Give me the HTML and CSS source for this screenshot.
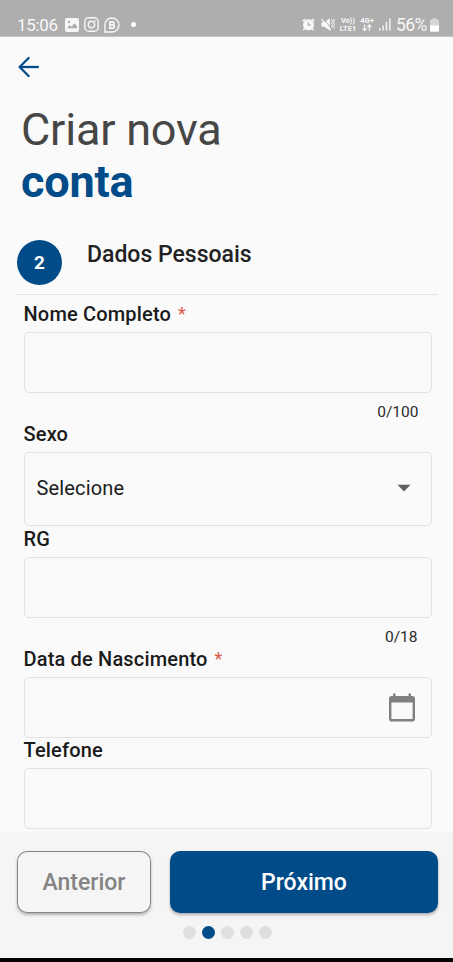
FILE: index.html
```html
<!DOCTYPE html>
<html lang="pt-BR">
<head>
<meta charset="utf-8">
<meta name="viewport" content="width=device-width">
<title>Criar nova conta</title>
<link rel="stylesheet" href="styles.css">
</head>
<body>
<div class="status">
  <span class="clock">15:06</span>
  <svg class="ic-photo" width="14" height="14" viewBox="0 0 14 14"><path fill="#f7f7f7" fill-rule="evenodd" d="M2 0h10a2 2 0 0 1 2 2v10a2 2 0 0 1-2 2H2a2 2 0 0 1-2-2V2a2 2 0 0 1 2-2zM1.800 10.200h10.400V8.500L9.300 5.300 6.600 8.700 4.700 7zM4 2.700a1.300 1.300 0 1 0 0 2.600 1.300 1.300 0 0 0 0-2.600z"/></svg>
  <svg class="ic-insta" width="15" height="15" viewBox="0 0 15 15" fill="none" stroke="#f7f7f7" stroke-width="1.400"><rect x=".8" y=".8" width="13.400" height="13.400" rx="3.800"/><circle cx="7.500" cy="7.500" r="3.200"/><circle cx="11.300" cy="3.700" r=".5" fill="#f7f7f7" stroke-width=".6"/></svg>
  <svg class="ic-chat" width="16" height="16" viewBox="0 0 16 16" fill="none" stroke="#f7f7f7" stroke-width="1.400"><path d="M.9 14.800V8A7 7 0 1 1 8 15H.9z"/><path stroke-width="1.600" d="M5.900 4.900h2.600a1.500 1.500 0 0 1 0 3H5.900zM5.900 7.900h2.900a1.600 1.600 0 0 1 0 3.200H5.900z"/></svg>
  <i class="notice"></i>
  <div class="system">
    <svg class="ic-alarm" width="13" height="13" viewBox="0 0 13 13"><circle cx="6.500" cy="6.800" r="5.500" fill="#fafafa"/><path d="M.7 3.200 3.200 1M12.300 3.200 9.800 1M2.600 10.800 1.300 12.300M10.400 10.800l1.300 1.500" stroke="#fafafa" stroke-width="1.600"/><path d="M6.300 3.800v3.300h2.600" fill="none" stroke="#aeaeae" stroke-width="1.100"/></svg>
    <svg class="ic-mute" width="14" height="13" viewBox="0 0 14 13"><path fill="#f8f8f8" d="M.5 4.300h3L8.800.3v12.200L3.500 8.700h-3z"/><path d="M2.200.500 10.500 10.500" stroke="#aeaeae" stroke-width="1"/><path d="M.6.800 9.800 12.300" stroke="#f8f8f8" stroke-width="1.200"/><path d="M10.500 1.200l1 1.800-1 1.800 1 1.800-1 1.800 1 1.800M12.500 1.200l1 1.800-1 1.800 1 1.800-1 1.800 1 1.800" fill="none" stroke="#f8f8f8" stroke-width="1"/></svg>
    <span class="net volte"><b>Vo))</b><b>LTE1</b></span>
    <span class="net data"><b>4G+</b><svg width="10" height="8" viewBox="0 0 10 8" fill="none" stroke="#f8f8f8" stroke-width="1.200"><path d="M2.600.5v6M.6 4.400l2 2.200 2-2.200M7.400 7V1M5.400 3.200l2-2.200 2 2.200"/></svg></span>
    <svg class="ic-signal" width="12" height="13" viewBox="0 0 12 13" fill="#f8f8f8"><path d="M0 10h1.400v2.600H0zM3.400 7.500h1.400v5.100H3.400zM6.800 4h1.400v8.600H6.800zM10.200.5h1.400v12.100h-1.400z"/></svg>
    <span class="percent">56%</span>
    <svg class="ic-battery" width="9" height="14" viewBox="0 0 9 14"><path fill="#d6d6d6" d="M2.500 1.500V.8q0-.6.600-.6h2.800q.6 0 .6.600v.7h.7Q9 1.500 9 3v5H0V3q0-1.500 1.800-1.500z"/><path fill="#fff" d="M0 7.600h9v4.800q0 1.400-1.400 1.400H1.400Q0 13.800 0 12.400z"/></svg>
  </div>
</div>
<main class="page">
  <svg class="back" width="22" height="22" viewBox="0 0 22 22" fill="none" stroke="#004b88" stroke-width="2.300"><path stroke-linecap="round" stroke-linejoin="round" d="M10.600 2 1.600 11l9 9"/><path d="M1.800 11h19"/></svg>
  <h1 class="title"><span>Criar nova</span><strong>conta</strong></h1>
  <div class="step">
    <span class="num">2</span>
    <h2>Dados Pessoais</h2>
  </div>
  <form class="form">
    <div class="field counted"><label>Nome Completo<em>*</em></label><div class="box"></div><small>0/100</small></div>
    <div class="field"><label>Sexo</label><div class="box select"><span>Selecione</span><svg width="14" height="8" viewBox="0 0 14 8"><path fill="#626262" d="M.4.700h13.200L7 7.500z"/></svg></div></div>
    <div class="field counted"><label>RG</label><div class="box"></div><small class="short">0/18</small></div>
    <div class="field tight"><label>Data de Nascimento<em>*</em></label><div class="box date"><svg width="26" height="29" viewBox="0 0 26 29"><path fill="#808080" fill-rule="evenodd" d="M4 .4h2.500V3h13V.4H22V3h1.200Q26 3 26 5.800v19.900q0 2.800-2.800 2.800H2.800Q0 28.500 0 25.700V5.800Q0 3 2.800 3H4zM2.400 9.400v16.700h21.200V9.400z"/></svg></div></div>
    <div class="field"><label>Telefone</label><div class="box"></div></div>
  </form>
</main>
<footer class="footer">
  <div class="actions"><button class="prev">Anterior</button><button class="next">Próximo</button></div>
  <div class="dots"><i></i><i class="on"></i><i></i><i></i><i></i></div>
</footer>
<div class="navbar"></div>
</body>
</html>
```
FILE: styles.css
```css
* { box-sizing: border-box; }
body { margin: 0; width: 453px; height: 962px; overflow: hidden; display: flex; flex-direction: column; background: #fafafa; font-family: Roboto, "Liberation Sans", sans-serif; color: #1b1b1b; }
svg { display: block; flex: none; }

.status { flex: none; height: 37px; padding: 13px 14px 0 17px; display: flex; align-items: center; background: #aeaeae; border-bottom: 1px solid #c2c2c2; color: #f8f8f8; }
.clock { width: 48px; font-size: 17px; line-height: 22px; letter-spacing: -.3px; }
.ic-insta { margin-left: 5px; }
.ic-chat { margin-left: 5px; }
.notice { width: 5px; height: 5px; margin-left: 11px; border-radius: 50%; background: #fff; }
.system { margin-left: auto; display: flex; align-items: center; }
.ic-mute { margin-left: 6px; }
.net { display: flex; flex-direction: column; align-items: center; font-size: 7.500px; line-height: 7.500px; }
.net b { font-weight: 700; }
.volte { width: 18px; margin-left: 4px; }
.data { width: 14px; margin-left: 3px; }
.ic-signal { margin-left: 5px; }
.percent { margin-left: 5px; width: 32px; font-size: 17.500px; line-height: 22px; letter-spacing: -.6px; white-space: nowrap; }
.ic-battery { margin-left: 2px; }

.page { flex: none; height: 795px; padding: 19px 15px 0 17px; }
.back { margin-left: 1px; }
.title { margin: 26px 0 0 4px; font-size: 45px; line-height: 52px; font-weight: 400; letter-spacing: -.2px; color: #464646; }
.title span, .title strong { display: block; }
.title strong { font-weight: 700; color: #004b88; }
.step { margin-top: 31px; height: 56px; display: flex; align-items: flex-start; border-bottom: 1.500px solid #e2e2e2; }
.num { width: 45px; height: 45px; margin-top: 1px; border-radius: 50%; background: #004b88; color: #fff; font-size: 19px; line-height: 45px; font-weight: 700; text-align: center; }
.step h2 { margin: 1px 0 0 25px; font-size: 23px; line-height: 30px; font-weight: 500; color: #222; }
.form { padding: 7px 6.500px 0 6.500px; }
.field { height: 105px; }
.field.counted { height: 120px; }
.field.tight { height: 91px; }
.field label { display: flex; height: 30px; font-size: 20px; line-height: 24px; font-weight: 500; letter-spacing: .17px; }
.field em { margin-left: 7px; font-size: 18px; font-style: normal; font-weight: 400; color: #dc5b4b; }
.box { height: 61px; border: 1.500px solid #e1e1e1; border-radius: 5px; }
.select { height: 74px; padding: 0 20px 2px 12px; display: flex; align-items: center; justify-content: space-between; font-size: 20px; letter-spacing: .15px; }
.date { padding-right: 16px; display: flex; align-items: center; justify-content: flex-end; }
.field small { display: block; padding: 10px 13px 0 0; font-size: 15.500px; line-height: 19px; text-align: right; color: #2b2b2b; }
.field small.short { padding-right: 14px; }

.footer { flex: none; height: 126px; padding: 19px 15px 0 17px; background: #f5f5f5; }
.actions { display: flex; gap: 19px; }
.actions button { height: 62px; padding: 1px 0 0; border: 0; border-radius: 10px; font-family: inherit; font-size: 23px; font-weight: 500; }
.prev { width: 134px; background: #f5f5f5; color: #848484; box-shadow: inset 0 0 0 1px #858585, 0 2px 3px rgba(0,0,0,.28); }
.next { flex: 1; background: #004b88; color: #fff; box-shadow: 0 2px 3px rgba(0,0,0,.28); }
.dots { margin-top: 13px; display: flex; gap: 6px; justify-content: center; }
.dots i { width: 13px; height: 13px; border-radius: 50%; background: #dfdfdf; }
.dots .on { background: #004b88; }
.navbar { height: 4px; background: #000; }
```
